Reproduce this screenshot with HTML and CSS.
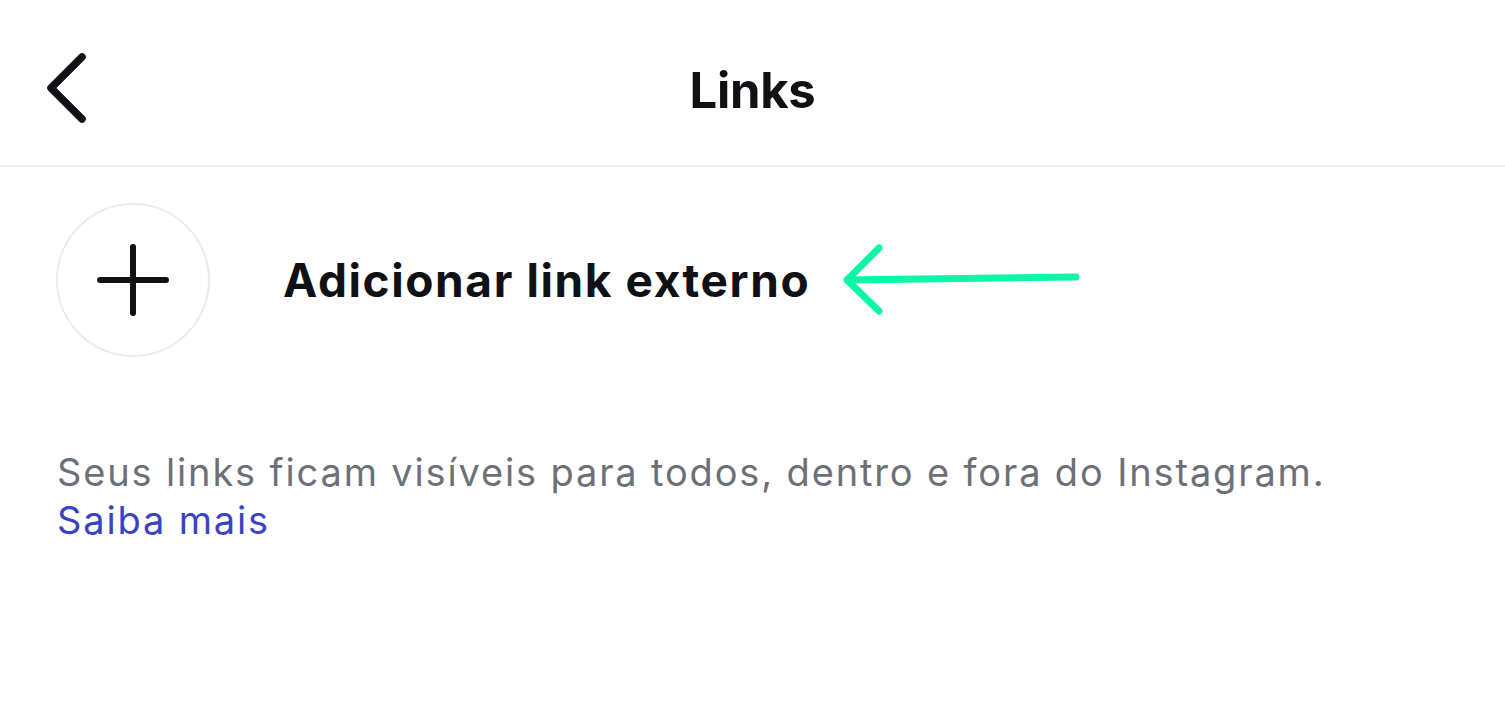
FILE: index.html
```html
<!DOCTYPE html>
<html lang="pt">
<head>
<meta charset="utf-8">
<link rel="stylesheet" href="styles.css">
</head>
<body>
<div class="screen">
  <header class="topbar">
    <button class="back" aria-label="Voltar">
      <svg width="44" height="70" viewBox="0 0 44 70"><path d="M37 4 L6 35 L37 66" fill="none" stroke="#101114" stroke-width="7.5" stroke-linecap="round" stroke-linejoin="round"/></svg>
    </button>
    <h1 class="title">Links</h1>
  </header>
  <div class="add-row">
    <div class="add-circle">
      <svg width="72" height="72" viewBox="0 0 72 72"><path d="M36 3 V69 M3 36 H69" stroke="#101114" stroke-width="6" stroke-linecap="round"/></svg>
    </div>
    <span class="add-label">Adicionar link externo</span>
    <svg class="arrow" width="240" height="72" viewBox="0 0 240 72"><path d="M6 37 L235 34 M38 5 L6 37 L38 68" fill="none" stroke="#0df5a6" stroke-width="7" stroke-linecap="round" stroke-linejoin="round"/></svg>
  </div>
  <p class="note">Seus links ficam visíveis para todos, dentro e fora do Instagram.<br><a class="more" href="#">Saiba mais</a></p>
</div>
</body>
</html>
```
FILE: styles.css
```css
* { box-sizing: border-box; }
html, body { margin: 0; padding: 0; background: #fff; }
body { font-family: Inter, "Noto Sans", sans-serif; color: #101114; }
.screen { width: 1505px; height: 710px; overflow: hidden; }
.topbar {
  height: 167px;
  border-bottom: 2px solid #efefef;
  display: flex;
  align-items: center;
  justify-content: center;
  position: relative;
}
.back {
  position: absolute;
  left: 45px;
  top: 53px;
  border: 0;
  padding: 0;
  background: none;
  display: flex;
}
.title {
  margin: 0;
  font-size: 49px;
  font-weight: 700;
  letter-spacing: -0.3px;
  padding-top: 15px;
}
.add-row {
  display: flex;
  align-items: center;
  padding-left: 56px;
  margin-top: 36px;
}
.add-circle {
  width: 154px;
  height: 154px;
  border-radius: 50%;
  border: 2px solid #ebebee;
  display: flex;
  align-items: center;
  justify-content: center;
  flex-shrink: 0;
}
.add-label {
  margin-left: 73px;
  font-size: 46px;
  font-weight: 700;
  letter-spacing: 1.6px;
}
.arrow { margin-left: 31px; margin-top: -2px; }
.note {
  margin: 91px 0 0 57px;
  font-size: 38px;
  line-height: 48px;
  color: #6d7077;
  letter-spacing: 1.85px;
}
.more { color: #3a43c6; text-decoration: none; }
```
